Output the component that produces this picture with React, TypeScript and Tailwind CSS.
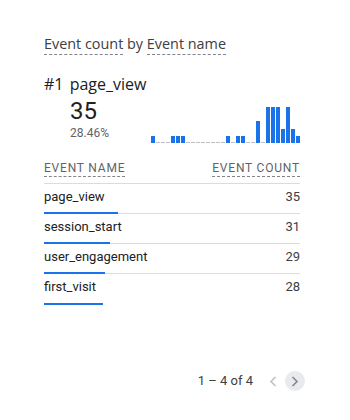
const bars = [1, 0, 0, 0, 1, 1, 1, 0, 0, 0, 0, 0, 0, 0, 0, 1, 0, 1, 1, 0, 0, 3, 0, 5, 5, 5, 2, 5, 2, 1];

const rows = [
  { name: "page_view", count: 35 },
  { name: "session_start", count: 31 },
  { name: "user_engagement", count: 29 },
  { name: "first_visit", count: 28 },
];

function Dashed({ children }: { children: React.ReactNode }) {
  return <span className="border-b border-dashed border-[#80868b] pb-[1px]">{children}</span>;
}

function Chevron({ dir, className }: { dir: "left" | "right"; className?: string }) {
  return (
    <svg width="8" height="11" viewBox="0 0 8 11" className={className} fill="none" stroke="currentColor" strokeWidth="1.6">
      {dir === "left" ? <polyline points="6.5,1 2,5.5 6.5,10" /> : <polyline points="1.5,1 6,5.5 1.5,10" />}
    </svg>
  );
}

export default function App() {
  return (
    <div className="w-[350px] h-[420px] bg-white flex flex-col pl-[44px] pr-[50px] pt-[35px] pb-[29px] font-['Roboto',sans-serif] text-[#202124]">
      {/* TITLE */}
      <div className="text-[14.4px] leading-[18px] text-[#3c4043] font-['Open_Sans',sans-serif]">
        <Dashed>Event count</Dashed> by <Dashed>Event name</Dashed>
      </div>

      {/* TOP ITEM */}
      <div className="mt-[20px] text-[16px] leading-[22px] font-['Open_Sans',sans-serif]">
        #1 <span className="ml-[2px]">page_view</span>
      </div>
      <div className="flex items-end justify-between mt-[2px]">
        <div className="ml-[26px]">
          <div className="text-[24px] leading-[28px]">35</div>
          <div className="text-[12px] leading-[14px] text-[#5f6368] mt-[1px]">28.46%</div>
        </div>
        <div className="flex items-end gap-[1px] h-[36px] -mb-[3px]">
          {bars.map((v, i) =>
            v > 0 ? (
              <div key={i} className="w-[4px] bg-[#1a73e8]" style={{ height: `${Math.round(v * 7.2)}px` }} />
            ) : (
              <div key={i} className="w-[4px] border-b border-dashed border-[#bdc1c6]" />
            )
          )}
        </div>
      </div>

      {/* TABLE */}
      <div className="mt-[21px]">
        <div className="flex justify-between items-end text-[12px] leading-[14px] tracking-[0.8px] text-[#5f6368] pb-[6px] border-b border-[#dadce0]">
          <Dashed>EVENT NAME</Dashed>
          <Dashed>EVENT COUNT</Dashed>
        </div>
        {rows.map((r, i) => (
          <div key={r.name} className={`relative h-[30px] ${i < rows.length - 1 ? "border-b border-[#dadce0]" : ""}`}>
            <div className="flex justify-between items-center pt-[5px] text-[13px] leading-[16px]">
              <span>{r.name}</span>
              <span className="text-[#3c4043]">{r.count}</span>
            </div>
            <div
              className="absolute left-0 bottom-[-1px] h-[2px] bg-[#1a73e8]"
              style={{ width: `${(r.count / 35) * 74}px` }}
            />
          </div>
        ))}
      </div>

      {/* PAGINATION */}
      <div className="mt-auto flex items-center justify-end text-[13px] leading-[20px] text-[#3c4043] -mr-[5px]">
        <span>1 – 4 of 4</span>
        <div className="w-[20px] h-[20px] ml-[10px] flex items-center justify-center text-[#bdc1c6]">
          <Chevron dir="left" />
        </div>
        <div className="w-[20px] h-[20px] ml-[2px] rounded-full bg-[#e8eaed] flex items-center justify-center text-[#80868b]">
          <Chevron dir="right" />
        </div>
      </div>
    </div>
  );
}
